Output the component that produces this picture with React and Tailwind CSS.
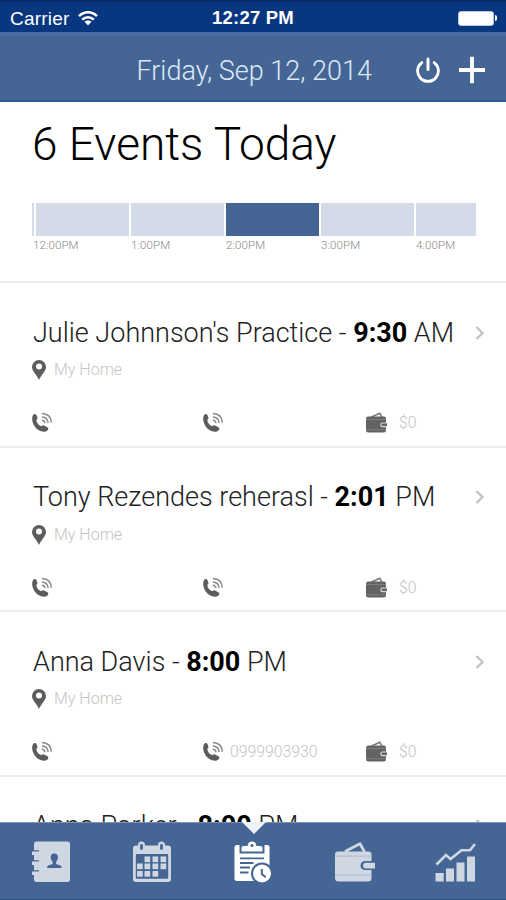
import React from "react";

const EVENTS = [
  { name: "Julie Johnnson's Practice", time: "9:30", period: "AM", place: "My Home", phone: "", cost: "$0" },
  { name: "Tony Rezendes reherasl", time: "2:01", period: "PM", place: "My Home", phone: "", cost: "$0" },
  { name: "Anna Davis", time: "8:00", period: "PM", place: "My Home", phone: "0999903930", cost: "$0" },
  { name: "Anna Parker", time: "8:00", period: "PM", place: "My Home", phone: "", cost: "$0" },
];

const HOURS = [
  { label: "12:00PM", width: "w-[93px]", shift: "-ml-[3px]" },
  { label: "1:00PM", width: "w-[93px]" },
  { label: "2:00PM", width: "w-[93px]", active: true },
  { label: "3:00PM", width: "w-[93px]" },
  { label: "4:00PM", width: "w-[60px]" },
];

const PhoneIcon = () => (
  <svg className="w-[21px] h-[21px] shrink-0" viewBox="0 0 21 21" fill="none">
    <path
      d="M.9 3.200C2 1.500 3.900 1.700 4.500 3.200l.9 2.300c.3.900-.1 1.600-1 2.200-.2 2.700 2.300 5.800 5 6.500.7-1 1.700-1.200 2.600-.7l3.500 1.800c1.200.8 1 2.200-.1 3.200-1.900 1.800-5.600 1.700-8.900-.4C2 15.500-1.400 8.300.900 3.200z"
      fill="#5c5c5c"
    />
    <path d="M9.800 8.300c1.800 0 3 1.100 3.100 3M9.900 5c3.600.2 5.900 2.400 6.200 6M9.900 1.600c5.500.2 9.100 3.600 9.500 9" stroke="#8a8a8a" strokeWidth="1.500" />
  </svg>
);

const PinIcon = () => (
  <svg className="w-[14px] h-[20px] shrink-0" viewBox="0 0 14 20">
    <path
      fillRule="evenodd"
      d="M7 0a7 7 0 0 0-7 7c0 4.200 4.600 7.600 7 13 2.400-5.400 7-8.800 7-13a7 7 0 0 0-7-7zm0 3.500a3 3 0 1 1 0 6 3 3 0 0 1 0-6z"
      fill="#5d5d5d"
    />
  </svg>
);

const SmallWalletIcon = () => (
  <svg className="w-[22px] h-[21px] shrink-0" viewBox="0 0 22 21" fill="none">
    <path d="M5.500 5L13.800 1.200l2 3.800" stroke="#777" strokeWidth="1.500" />
    <path d="M2.500 4.500h15.500Q20 4.500 20 6.500V18q0 2.500-2.500 2.500H2.500Q0 20.500 0 18V6.500Q0 4.500 2.500 4.500z" fill="#636363" />
    <path d="M0 7.500h20M0 17.700h20" stroke="#858585" strokeWidth=".8" />
    <path d="M21 11h-5a2 2 0 0 0 0 3.600h5" stroke="#d8d8d8" strokeWidth="1.200" fill="#666" />
  </svg>
);

const ChevronIcon = () => (
  <svg className="w-[10px] h-[16px] shrink-0" viewBox="0 0 10 16" fill="none">
    <path d="M1.500 2L7.500 8l-6 6" stroke="#c3c4cb" strokeWidth="2.400" />
  </svg>
);

const ContactsIcon = () => (
  <svg className="w-[40px] h-[42px]" viewBox="0 0 40 42">
    <path
      d="M5 .5h31.500Q39 .5 39 3v35.500q0 2.500-2.500 2.500H5.500Q3 41 3 38.500V34H1v-3.500h7v-1.300H3V24H1v-3.500h7v-1.300H3V14H1v-3.500h7V9.200H3V3Q3 .5 5 .5z"
      fill="#cfd7e3"
    />
    <path
      d="M23.300 12.500c2.400 0 3.700 1.600 3.600 4-.1 1.800-.9 3.200-1.800 4.300v2.300l4.300 1.300c.9.300 1.100 1 1.100 2.600H16.200c0-1.600.2-2.300 1.100-2.600l4.300-1.300v-2.300c-1-1.100-1.800-2.500-1.900-4.300-.1-2.400 1.200-4 3.600-4z"
      fill="#456695"
    />
  </svg>
);

const CALENDAR_CELLS = [
  [12.500, 15.500], [20.500, 15.500], [28.500, 15.500],
  [5, 22.500], [12.500, 22.500], [20.500, 22.500], [28.500, 22.500],
  [5, 30], [12.500, 30], [20.500, 30],
];

const CalendarIcon = () => (
  <svg className="w-[40px] h-[42px]" viewBox="0 0 40 42">
    <rect x="1" y="4.500" width="38" height="36.500" rx="3" fill="#cfd7e3" />
    <rect x="3.800" y="13" width="32.400" height="24.800" rx="1" fill="#456695" />
    {[9.500, 29.500].map((x) => (
      <g key={x}>
        <rect x={x - 3.500} y="0.500" width="7" height="9" rx="3.500" fill="#cfd7e3" />
        <rect x={x - 1.400} y="3" width="2.800" height="6" rx="1.400" fill="#456695" />
      </g>
    ))}
    {CALENDAR_CELLS.map(([x, y]) => (
      <rect key={`${x}-${y}`} x={x} y={y} width="5.700" height="5.700" fill="#cfd7e3" />
    ))}
  </svg>
);

const AgendaIcon = () => (
  <svg className="w-[40px] h-[42px]" viewBox="0 0 40 42">
    <rect x="1.500" y="4" width="35" height="36" rx="2.500" fill="#fff" />
    <path d="M6.500 3.500h25v9h-25z" fill="#456695" />
    <path d="M8.500 10.500V7q0-2 2-2h4c.3-3 2-4.500 4.500-4.500S23.200 2 23.500 5h4q2 0 2 2v3.500z" fill="#fff" />
    <circle cx="19" cy="4.500" r="1.500" fill="#456695" />
    <path d="M7 17.400h24M7 22h13.500M7 26.500h10M7 31.500h8.500" stroke="#456695" strokeWidth="1.900" />
    <circle cx="29" cy="32.500" r="11" fill="#456695" />
    <circle cx="29" cy="32.500" r="9" fill="#fff" />
    <path d="M28.800 28v5l4 3.200" stroke="#456695" strokeWidth="2" fill="none" />
  </svg>
);

const WalletIcon = () => (
  <svg className="w-[42px] h-[42px] ml-[1px]" viewBox="0 0 42 42" fill="none">
    <path d="M11 10.500L26 2.800l4.500 8" stroke="#cfd7e3" strokeWidth="2.800" strokeLinejoin="round" />
    <path
      d="M4 10.500h30.500q3 0 3 3V20H32q-5.500 0-5.500 4.500T32 29h5.500v8q0 3.500-3.500 3.500H4.500Q1 40.500 1 37V13.500q0-3 3-3z"
      fill="#cfd7e3"
    />
    <path d="M1.500 15.200h35M1.500 34.200h35" stroke="#a3b1c8" strokeWidth="1.200" strokeDasharray="1.800 1.200" />
    <path d="M32 21.700h9v5.800h-9q-3 0-3-2.900t3-2.900z" fill="#cfd7e3" />
  </svg>
);

const ChartIcon = () => (
  <svg className="w-[42px] h-[42px] ml-[2px]" viewBox="0 0 42 42" fill="none">
    <path d="M.5 32H8.700V40.500H.5zM11 27.500H19v13h-8zM21.500 21.500h8v19h-8zM32 15.500h8v25h-8z" fill="#cfd7e3" />
    <path d="M1.500 23.500L11 14l4.500 4L26.500 9.300h8.500L40 3" stroke="#cfd7e3" strokeWidth="2.600" />
  </svg>
);

const StatusBar = () => (
  <div className="h-8 shrink-0 grid grid-cols-3 items-center px-[10px] pt-0.5 bg-[#08377f] border-t-2 border-[#062a62] text-white">
    <div className="flex items-center gap-[9px] font-['Liberation_Sans'] text-[19px] leading-none tracking-[0.2px]">
      <span>Carrier</span>
      <svg className="w-[20px] h-[15px]" viewBox="0 0 20 15" fill="none">
        <path d="M1 5.200C6-.1 14-.1 19 5.200M4.200 8.600c3.300-3.300 8.300-3.300 11.600 0" stroke="#fff" strokeWidth="2.500" />
        <path d="M6.500 10.800c2-1.900 5-1.900 7 0L10 14.500z" fill="#fff" />
      </svg>
    </div>
    <div className="text-center font-['Liberation_Sans'] font-bold text-[18.500px] leading-none tracking-[0.2px] whitespace-nowrap">12:27 PM</div>
    <div className="flex items-center justify-end -mr-[1px]">
      <div className="w-[36px] h-[15px] rounded-[3px] bg-white border border-[#b9c7df]" />
      <div className="w-[2px] h-[6px] ml-[1px] rounded-r bg-white" />
    </div>
  </div>
);

const Header = () => (
  <div className="h-[70px] shrink-0 flex items-center justify-end pr-[21px] pt-[4px] bg-[#456695] border-t-4 border-t-[#4b6da4] border-b-2 border-b-[#315a91]">
    <h2 className="pt-[2px] mr-[44px] text-[27px] leading-none font-light text-[#dce8f6]">Friday, Sep 12, 2014</h2>
    <svg className="w-[24px] h-[26px] mr-[19px]" viewBox="0 0 24 26" fill="none" stroke="#fff" strokeLinecap="round">
      <path d="M5.800 5.600a10.400 10.400 0 1 0 12.400 0" strokeWidth="2.800" />
      <path d="M12 2v10.500" strokeWidth="3" />
    </svg>
    <svg className="w-[26px] h-[28px]" viewBox="0 0 26 28" stroke="#fff" strokeWidth="3.800">
      <path d="M13 .8v26.400M0 14h26" />
    </svg>
  </div>
);

const EventRow = ({ data }) => (
  <div className="h-[164.500px] shrink-0 pl-[32px] border-b-[2.500px] border-[#eceef4]">
    <div className="flex items-center justify-between h-[31px] mt-[34px] pr-[21px]">
      <div className="pt-px pl-px text-[27px] leading-none font-light text-[#222] whitespace-nowrap">
        {data.name} - <span className="font-bold text-black">{data.time}</span> {data.period}
      </div>
      <ChevronIcon />
    </div>
    <div className="flex items-center gap-[8px] h-5 mt-[12px] text-[16px] font-light text-[#c4c4c4]">
      <PinIcon />
      <span>{data.place}</span>
    </div>
    <div className="grid grid-cols-[171px_163px_auto] items-center h-[22px] mt-[31px] text-[15.800px] font-light text-[#c4c4c4]">
      <PhoneIcon />
      <div className="flex items-center gap-[6px]">
        <PhoneIcon />
        <span>{data.phone}</span>
      </div>
      <div className="flex items-center gap-[11px]">
        <SmallWalletIcon />
        <span>{data.cost}</span>
      </div>
    </div>
  </div>
);

const TABS = [ContactsIcon, CalendarIcon, AgendaIcon, WalletIcon, ChartIcon];

const App = () => {
  return (
    <div className="w-[506px] h-[900px] flex flex-col overflow-hidden bg-white font-['Roboto',sans-serif]">
      <StatusBar />
      <Header />
      <div className="h-[181px] shrink-0 pl-[32px] border-b-[2.500px] border-[#eceef4]">
        <h1 className="mt-[18px] text-[46px] leading-[48px] font-light text-black whitespace-nowrap">6 Events Today</h1>
        <div className="flex gap-[2px] mt-[35px]">
          <div className="w-[2px] h-[33px] bg-[#d2dbe7]" />
          {HOURS.map((hour) => (
            <div key={hour.label} className={hour.width}>
              <div className={`h-[33px] ${hour.active ? "bg-[#456695]" : "bg-[#d2dbe7]"}`} />
              <div className={`mt-[2px] text-[11.500px] leading-[14px] tracking-[0.1px] font-light text-[#888] ${hour.shift || ""}`}>
                {hour.label}
              </div>
            </div>
          ))}
        </div>
      </div>
      <div className="flex-1 min-h-0 flex flex-col overflow-hidden">
        {EVENTS.map((event) => (
          <EventRow key={event.name} data={event} />
        ))}
      </div>
      <div className="relative h-[78px] shrink-0 grid grid-cols-5 justify-items-center pt-[18px] bg-[#456695] border-t border-t-[#7891b5] border-b border-b-[#294d7e]">
        <svg className="absolute left-[242px] -top-[1px] w-[24px] h-[12px]" viewBox="0 0 24 12">
          <path d="M0 0h24L12 12z" fill="#eef2f8" />
        </svg>
        {TABS.map((Icon, i) => (
          <Icon key={i} />
        ))}
      </div>
    </div>
  );
};

export default App;
